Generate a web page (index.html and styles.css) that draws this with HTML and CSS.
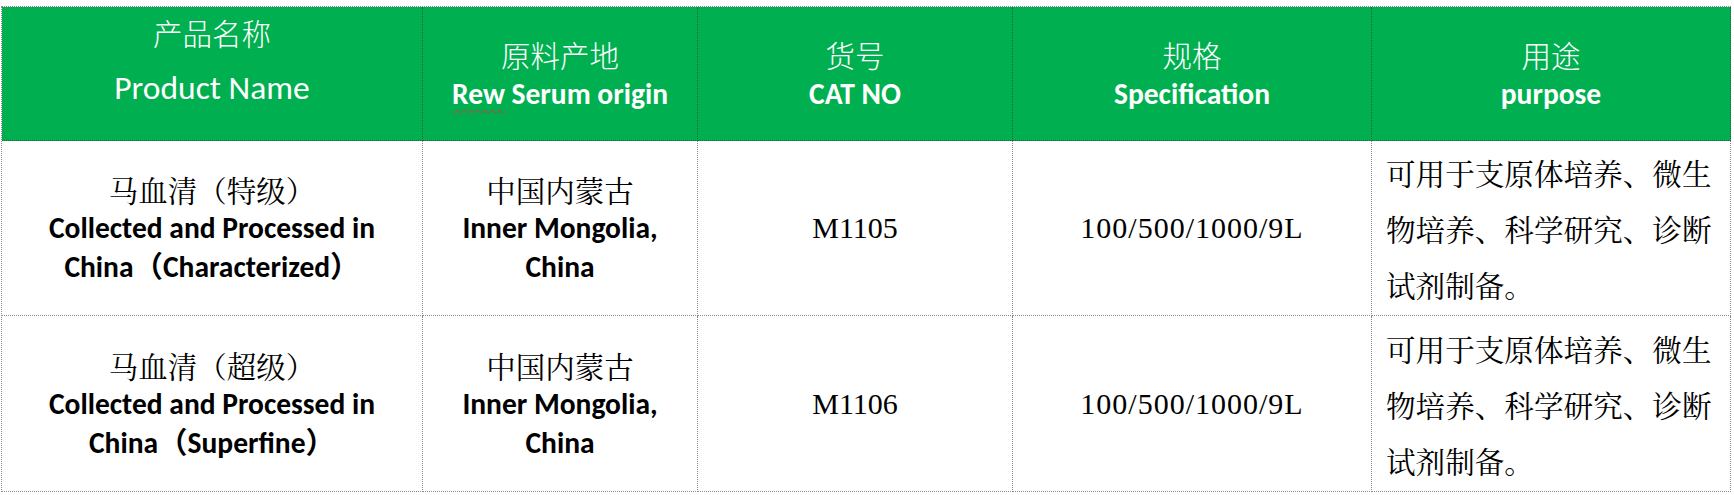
FILE: index.html
```html
<!DOCTYPE html>
<html lang="zh-CN">
<head>
<meta charset="utf-8">
<title>马血清产品</title>
<link rel="stylesheet" href="styles.css">
</head>
<body>
<div class="sheet">
  <div class="cell head head-first">
    <div class="h-cn">产品名称</div>
    <div class="h-en-light">Product Name</div>
  </div>
  <div class="cell head">
    <div class="h-cn">原料产地</div>
    <div class="h-en"><span class="typo">Rew</span> Serum origin</div>
  </div>
  <div class="cell head">
    <div class="h-cn">货号</div>
    <div class="h-en">CAT NO</div>
  </div>
  <div class="cell head">
    <div class="h-cn">规格</div>
    <div class="h-en">Specification</div>
  </div>
  <div class="cell head">
    <div class="h-cn">用途</div>
    <div class="h-en">purpose</div>
  </div>

  <div class="cell body">
    <div class="b-cn">马血清（特级）</div>
    <div class="b-en">Collected and Processed in</div>
    <div class="b-en">China（Characterized）</div>
  </div>
  <div class="cell body">
    <div class="b-cn">中国内蒙古</div>
    <div class="b-en">Inner Mongolia,</div>
    <div class="b-en">China</div>
  </div>
  <div class="cell body"><div class="num cat">M1105</div></div>
  <div class="cell body"><div class="num">100/500/1000/9L</div></div>
  <div class="cell body purpose">
    <div class="p-cn">可用于支原体培养、微生<br>物培养、科学研究、诊断<br>试剂制备。</div>
  </div>

  <div class="cell body last">
    <div class="b-cn">马血清（超级）</div>
    <div class="b-en">Collected and Processed in</div>
    <div class="b-en">China（Superfine）</div>
  </div>
  <div class="cell body last">
    <div class="b-cn">中国内蒙古</div>
    <div class="b-en">Inner Mongolia,</div>
    <div class="b-en">China</div>
  </div>
  <div class="cell body last"><div class="num cat">M1106</div></div>
  <div class="cell body last"><div class="num">100/500/1000/9L</div></div>
  <div class="cell body purpose last">
    <div class="p-cn">可用于支原体培养、微生<br>物培养、科学研究、诊断<br>试剂制备。</div>
  </div>
</div>
</body>
</html>
```

FILE: styles.css
```css
html, body {
  margin: 0;
  padding: 0;
  background: #ffffff;
}

body {
  padding: 6px 0 0 1px;
}

.sheet {
  display: grid;
  grid-template-columns: 421px 275px 315px 359px 359px;
  grid-template-rows: 134px 175px 176px;
  width: max-content;
  border-top: 1px dotted #8a8a8a;
  border-left: 1px dotted #8a8a8a;
}

.cell {
  box-sizing: border-box;
  border-right: 1px dotted #8a8a8a;
  border-bottom: 1px dotted #8a8a8a;
  display: flex;
  flex-direction: column;
  justify-content: center;
  align-items: center;
  text-align: center;
}

.head {
  background: #00b050;
  color: #ffffff;
  border-right-color: #2f5e3f;
  border-bottom-color: #2f5e3f;
}

.head-first {
  justify-content: flex-start;
  padding-top: 5px;
}

.h-cn {
  font-family: "Noto Sans CJK SC", sans-serif;
  font-weight: 300;
  font-size: 29.5px;
  line-height: 40px;
}

.h-en {
  font-family: "Carlito", "Lato", "Noto Sans CJK SC", sans-serif;
  font-weight: 700;
  font-size: 29.5px;
  line-height: 40px;
}

.h-en-light {
  font-family: "Carlito", "Lato", sans-serif;
  font-weight: 300;
  font-size: 33.5px;
  line-height: 46px;
  margin-top: 13px;
}

.typo {
  text-decoration: underline wavy #d23a3a;
  text-decoration-thickness: 1px;
  text-underline-offset: 5px;
}

.body {
  color: #000000;
}

.b-cn {
  font-family: "Noto Serif CJK SC", "Noto Sans CJK SC", serif;
  font-size: 29.5px;
  line-height: 40px;
}

.b-en {
  font-family: "Carlito", "Lato", "Noto Sans CJK SC", sans-serif;
  font-weight: 700;
  font-size: 29.5px;
  line-height: 39px;
}

.num {
  font-family: "Liberation Serif", "Noto Serif CJK SC", serif;
  font-size: 30px;
  line-height: 40px;
  letter-spacing: 1px;
}

.num.cat {
  letter-spacing: 0;
}

.purpose {
  align-items: flex-start;
  text-align: left;
  padding-left: 14px;
}

.p-cn {
  font-family: "Noto Serif CJK SC", "Noto Sans CJK SC", serif;
  font-size: 29.6px;
  line-height: 56px;
  white-space: nowrap;
}
```
